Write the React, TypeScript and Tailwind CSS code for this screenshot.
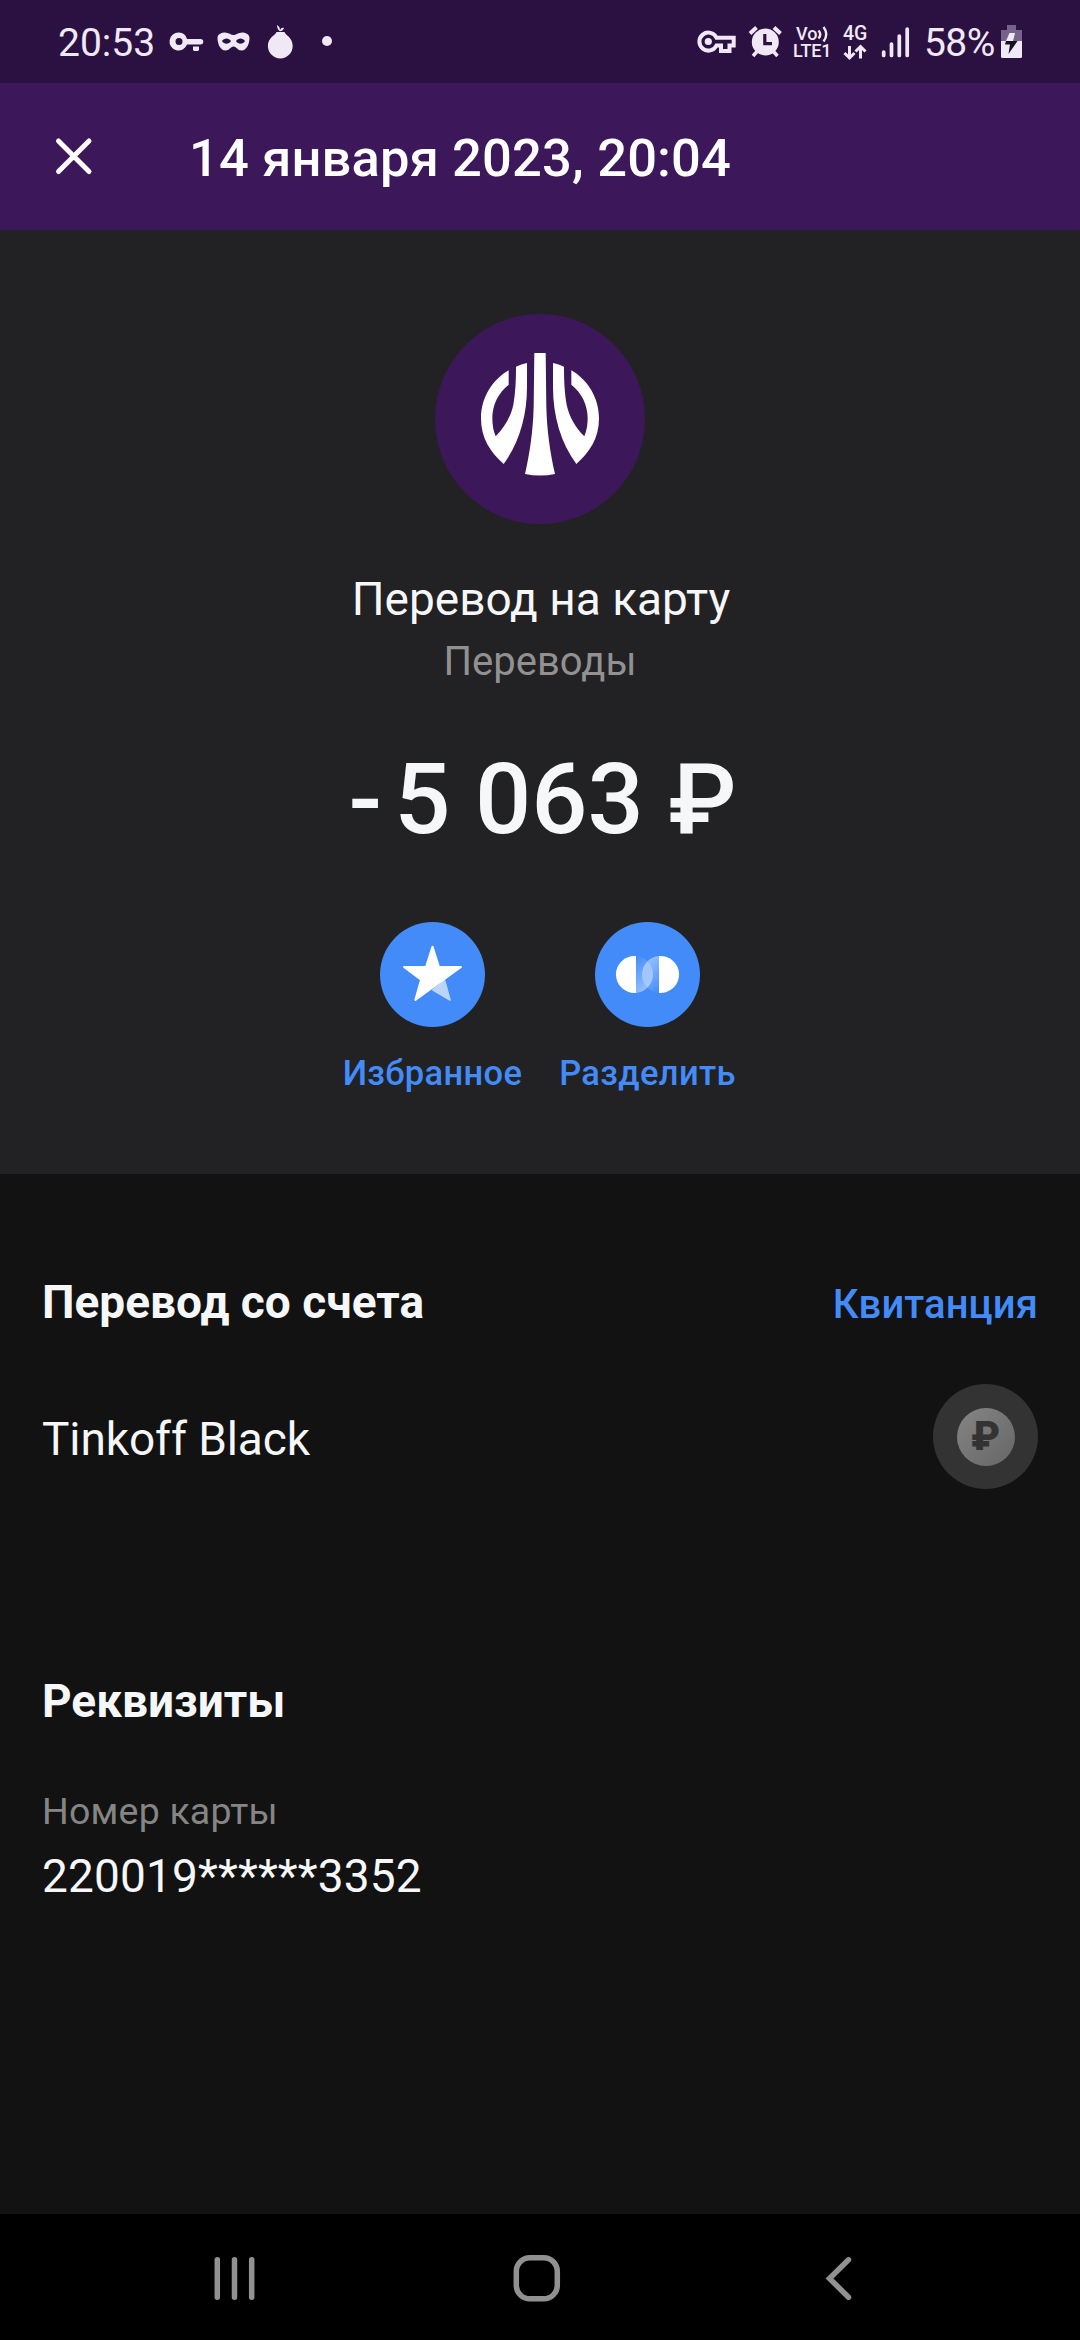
const actions = [
  { label: "Избранное", icon: <FavoriteIcon /> },
  { label: "Разделить", icon: <SplitIcon /> },
]

const STAR_LEG = "M344 212L360 270L309 240Z"
const LOGO_WING =
  "M236 181V224C205 248 187 285 187 325C187 345 190 362 197 379C224 352 243 318 250 284C256 250 258 215 258 170Q273 163 291 159V230C291 320 267 398 221 462C180 425 153 385 153 325C153 265 185 211 236 181Z"

function FavoriteIcon() {
  return (
    <svg viewBox="150 36 315 315" className="size-[105px]">
      <circle cx="307.5" cy="193.5" r="157.5" fill="#428bf9" />
      <path d={STAR_LEG} fill="#bcd5fd" stroke="#bcd5fd" strokeWidth="5" strokeLinejoin="round" />
      <path
        d="M307.5 110L327 171H393L256 270L273 209L222 171H288Z"
        fill="#fff"
        stroke="#fff"
        strokeWidth="6"
        strokeLinejoin="round"
      />
    </svg>
  )
}

function SplitIcon() {
  return (
    <svg viewBox="795 36 315 315" className="size-[105px]">
      <defs>
        <linearGradient id="split-left" x1="0" y1="0" x2="0.4" y2="1">
          <stop offset="0" stopColor="#fff" stopOpacity="0" />
          <stop offset="1" stopColor="#fff" stopOpacity="0.45" />
        </linearGradient>
        <linearGradient id="split-right" x1="0.6" y1="0" x2="1" y2="1">
          <stop offset="0" stopColor="#fff" stopOpacity="0.45" />
          <stop offset="1" stopColor="#fff" stopOpacity="0" />
        </linearGradient>
      </defs>
      <circle cx="952.5" cy="193.5" r="157.5" fill="#428bf9" />
      <path d="M918 138.200A55.500 55.500 0 0 1 918 248.800Z" fill="url(#split-left)" />
      <path d="M987 138.200A55.500 55.500 0 0 0 987 248.800Z" fill="url(#split-right)" />
      <path d="M918 138.200A55.500 55.500 0 1 0 918 248.800Z" fill="#fff" />
      <path d="M987 138.200A55.500 55.500 0 1 1 987 248.800Z" fill="#fff" />
    </svg>
  )
}

function BrandLogo() {
  return (
    <svg viewBox="15 12 630 630" className="size-[210px]">
      <circle cx="330" cy="327" r="315" fill="#3c185b" />
      <path d={LOGO_WING} fill="#fff" />
      <path d={LOGO_WING} fill="#fff" transform="translate(660 0) scale(-1 1)" />
      <path
        d="M313 129H347L349 290C351 365 361 430 375 492Q330 501 285 492C299 430 309 365 311 290Z"
        fill="#fff"
      />
    </svg>
  )
}

function StatusBar() {
  return (
    <div className="flex h-[83px] bg-[#2b1141] pl-[58px] text-[#f0e9f5]">
      <div className="w-[110px] pt-[20px] text-[39px] leading-[46px]">20:53</div>
      <svg viewBox="168 0 40 83" className="h-[83px] w-[40px] shrink-0" fill="currentColor">
        <path
          fillRule="evenodd"
          d="M179 32.500A9 9 0 0 1 187 39H200.500A2.600 2.600 0 0 1 200.500 44.500H187A9 9 0 1 1 179 32.500ZM179 38A3.500 3.500 0 1 0 179 45A3.500 3.500 0 1 0 179 38Z"
        />
        <path d="M193 46.500H199V50L198 51H194L193 50Z" />
      </svg>
      <svg viewBox="208 0 50 83" className="h-[83px] w-[50px] shrink-0" fill="currentColor">
        <path
          fillRule="evenodd"
          d="M224 32.500C228 32 231 35 233.500 35C236 35 239 32 243 32.500C247 33 249.500 35 249.500 38C249.500 43 247 50.500 241.500 50.500C237.500 50.500 236.500 46.500 233.500 46.500C230.500 46.500 229.500 50.500 225.500 50.500C220 50.500 217.500 43 217.500 38C217.500 35 220 33 224 32.500ZM222 41C224 37.500 229 37.500 231 41C229 44.500 224 44.500 222 41ZM236 41C238 37.500 243 37.500 245 41C243 44.500 238 44.500 236 41Z"
        />
      </svg>
      <svg viewBox="258 0 45 83" className="h-[83px] w-[45px] shrink-0" fill="currentColor">
        <path d="M276.500 32H284.500C285 35 292.700 37 292.700 46A12.400 12.400 0 0 1 267.900 46C267.900 37 276 35 276.500 32Z" />
        <path d="M277 25C279 26 280 28 280 30C281 28 282.500 27.500 284 28C283.500 30 282 31 280 31.300C278 30 277 28 277 25Z" />
      </svg>
      <svg viewBox="303 0 40 83" className="h-[83px] w-[40px] shrink-0" fill="currentColor">
        <circle cx="327" cy="41" r="5" />
      </svg>

      <svg viewBox="690 0 52 83" className="ml-auto h-[83px] w-[52px] shrink-0" fill="none" stroke="currentColor" strokeWidth="4">
        <path d="M716.500 37.700A9 9 0 1 0 716.500 45.500H721V51H729.500V45.500H733.700V37.700Z" />
        <circle cx="708.300" cy="41.500" r="3.600" fill="currentColor" stroke="none" />
      </svg>
      <svg viewBox="742 0 46 83" className="h-[83px] w-[46px] shrink-0" fill="none" stroke="currentColor">
        <circle cx="765.300" cy="42" r="13.500" fill="currentColor" stroke="none" />
        <path d="M750 33.500L756.500 27.500M780.500 33.500L774 27.500" strokeWidth="4" />
        <path d="M753 56L757 51.500M777.500 56L773.500 51.500" strokeWidth="3.500" />
        <path d="M764.800 34V43.700H772" stroke="#2b1141" strokeWidth="3.200" />
      </svg>
      <div className="w-[50px] pl-[5px] pt-[25px] text-[18px] font-medium">
        <div className="flex h-[17px] items-center pl-[3px] leading-[17px]">
          Vo
          <svg viewBox="0 0 12 16" className="h-4 w-3 shrink-0" fill="none" stroke="currentColor" strokeWidth="2.400">
            <path d="M1.500 4.500Q5 8.500 1.500 12.500M6.500 1Q12 8 6.500 15.500" />
          </svg>
        </div>
        <div className="leading-[18px] tracking-[-0.1px]">LTE1</div>
      </div>
      <div className="w-[36px] pl-[5px] pt-[26px] text-[19.5px] font-medium leading-[16px]">
        4G
        <svg viewBox="0 0 24 18" className="mt-[2px] h-[18px] w-[24px]" fill="none" stroke="currentColor" strokeWidth="3">
          <path d="M6.500 2V13.500M1.500 9L6.500 14L11.500 9M17.500 14.500V3M12.500 7.500L17.500 2.500L22.500 7.500" />
        </svg>
      </div>
      <svg viewBox="874 0 44 83" className="h-[83px] w-[44px] shrink-0" stroke="currentColor" strokeWidth="3.700" strokeLinecap="round">
        <path d="M883.700 52V55.500M891.500 44V55.500M899.300 36V55.500M907.200 29V55.500" />
      </svg>
      <div className="w-[79px] whitespace-nowrap pl-[6px] pt-[20px] text-[39px] leading-[46px] tracking-[-0.6px]">58%</div>
      <svg viewBox="997 0 83 83" className="h-[83px] w-[83px] shrink-0">
        <path d="M1007 25H1016V30H1022V41H1001V30H1007Z" fill="#75638a" />
        <path d="M1001 41H1022V56.500Q1022 58 1020.500 58H1002.500Q1001 58 1001 56.500Z" fill="currentColor" />
        <path d="M1009.500 33H1015L1013 41H1006Z" fill="currentColor" />
        <path d="M1006 41H1017.500L1008.500 54L1010 44.500H1005Z" fill="#171020" />
      </svg>
    </div>
  )
}

function NavigationBar() {
  return (
    <div className="flex h-[126px] gap-[255px] bg-black pl-[210px] pt-[40px] text-[#919191]">
      <svg viewBox="0 0 48 48" className="size-12" stroke="currentColor" strokeWidth="5.500" strokeLinecap="round">
        <path d="M7.300 5.800V43.200M24.500 5.800V43.200M41.700 5.800V43.200" />
      </svg>
      <svg viewBox="0 0 48 48" className="size-12" fill="none" stroke="currentColor" strokeWidth="5.500">
        <rect x="3.300" y="3.800" width="41" height="41" rx="13.500" />
      </svg>
      <svg viewBox="0 0 48 48" className="size-12" fill="none" stroke="currentColor" strokeWidth="5.500" strokeLinecap="round">
        <path d="M32.500 5.800L13.500 24.500L32.500 43.200" />
      </svg>
    </div>
  )
}

export default function App() {
  return (
    <div className="flex h-[2340px] w-[1080px] flex-col overflow-hidden bg-[#121212] font-[Roboto,sans-serif] text-[#f6f7f9]">
      <StatusBar />

      <header className="flex h-[147px] items-center bg-[#3c185b] pb-px pl-[50px] text-white">
        <svg viewBox="0 0 48 48" className="size-12" stroke="currentColor" strokeWidth="5" strokeLinecap="round">
          <path d="M8.500 9L39 39.500M39 9L8.500 39.500" />
        </svg>
        <h1 className="ml-[91px] mt-[3px] text-[52.5px] font-medium leading-[62px] tracking-[0.15px]">
          14 января 2023, 20:04
        </h1>
      </header>

      <section className="flex h-[944px] flex-col items-center bg-[#222224] pt-[84px]">
        <BrandLogo />
        <div className="mt-[48px] pl-[2px] text-[46px] leading-[54px]">Перевод на карту</div>
        <div className="mt-[13px] text-[40px] leading-[46px] text-[#919191]">Переводы</div>
        <div className="mt-[56px] flex gap-[12px] pl-[5px] text-[99px] font-medium leading-[116px]">
          <span>-</span>
          <span>5 063 ₽</span>
        </div>
        <div className="mt-[65px] flex">
          {actions.map((action) => (
            <div key={action.label} className="flex w-[215px] flex-col items-center">
              {action.icon}
              <div className="mt-[26px] text-[34.5px] font-medium leading-[40px] tracking-[0.35px] text-[#428bf9]">
                {action.label}
              </div>
            </div>
          ))}
        </div>
      </section>

      <main className="flex-1 px-[42px] pt-[101px]">
        <div className="flex items-baseline justify-between">
          <h2 className="text-[46px] font-bold leading-[54px]">Перевод со счета</h2>
          <span className="text-[40px] font-medium leading-[46px] tracking-[0.1px] text-[#428bf9]">Квитанция</span>
        </div>
        <div className="mt-[55px] flex h-[105px] items-center justify-between">
          <span className="pt-[5px] text-[46px] leading-[54px] tracking-[-0.1px]">Tinkoff Black</span>
          <div className="flex size-[105px] items-center justify-center rounded-full bg-[#333333]">
            <div className="flex size-[58px] items-center justify-center rounded-full bg-linear-to-br from-[#858585] to-[#666666] text-[40px] font-black leading-none text-[#333333]">
              ₽
            </div>
          </div>
        </div>

        <h2 className="mt-[185px] text-[46px] font-bold leading-[54px]">Реквизиты</h2>
        <div className="mt-[61px] text-[37.5px] leading-[44px] tracking-[0.2px] text-[#858585]">Номер карты</div>
        <div className="mt-[16px] text-[46px] leading-[54px] tracking-[0.15px]">220019******3352</div>
      </main>

      <NavigationBar />
    </div>
  )
}
